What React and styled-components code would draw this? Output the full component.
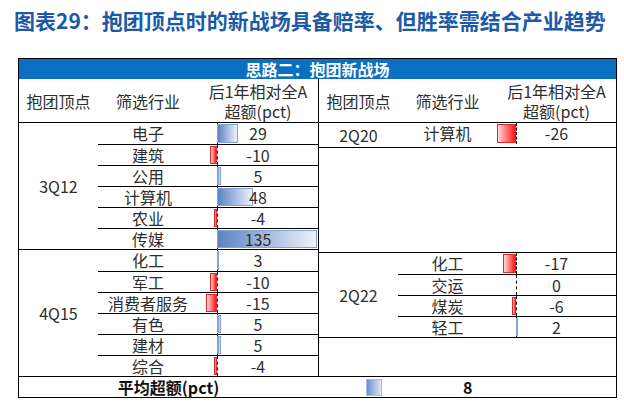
import styled, { createGlobalStyle, css } from "styled-components";

const GlobalStyle = createGlobalStyle`
  html, body {
    margin: 0;
    padding: 0;
    background: #fff;
  }
  body {
    font-family: "Noto Sans CJK SC", "Liberation Sans", sans-serif;
    color: #2e2e2e;
  }
`;

const AXIS = 19;
const SCALE = 0.74;

const Page = styled.main`
  width: 624px;
  height: 410px;
  box-sizing: border-box;
  padding: 6px 0 0 14px;
`;

const Title = styled.h1`
  margin: 0;
  font-size: 21px;
  line-height: 28px;
  font-weight: 700;
  color: #1c5aa6;
  white-space: nowrap;
`;

const Table = styled.section`
  margin: 24px 0 0 4px;
  width: 599px;
  box-sizing: border-box;
  border: 1px solid #000;
  display: grid;
  grid-template-columns: 299px 1fr;
  font-size: 16px;
`;

const Banner = styled.div`
  grid-column: 1 / -1;
  height: 20px;
  background: #0b6fc2;
  color: #fff;
  font-weight: 700;
  font-size: 16px;
  line-height: 20px;
  text-align: center;
`;

const Half = styled.div`
  display: flex;
  flex-direction: column;
  ${(p) => p.$right && css`border-left: 1px solid #000;`}
`;

const HeadRow = styled.div`
  display: grid;
  grid-template-columns: ${(p) => p.$cols};
  height: 44px;
  box-sizing: border-box;
  border-bottom: 1px solid #000;
  align-items: center;
  text-align: center;
  line-height: 20px;
`;

const Group = styled.div`
  display: grid;
  grid-template-columns: 79px 1fr;
  ${(p) => p.$top && css`border-top: 1px solid #000;`}
  ${(p) => p.$bottom && css`border-bottom: 1px solid #000;`}
`;

const GroupLabel = styled.div`
  display: flex;
  align-items: center;
  justify-content: center;
`;

const Rows = styled.div`
  display: flex;
  flex-direction: column;
`;

const Row = styled.div`
  display: grid;
  grid-template-columns: ${(p) => p.$nameW}px 1fr;
  height: 21px;
  box-sizing: border-box;
  line-height: 20px;
  &:not(:first-child) {
    border-top: 1px solid #000;
  }
`;

const Name = styled.div`
  text-align: center;
`;

const ValueCell = styled.div`
  position: relative;
  text-align: center;
  &::before {
    content: "";
    position: absolute;
    left: ${AXIS}px;
    top: 0;
    bottom: 0;
    border-left: 1px dashed #000;
  }
`;

const Bar = styled.span`
  position: absolute;
  top: 1px;
  bottom: 1px;
  box-sizing: border-box;
  ${(p) =>
    p.$neg
      ? css`
          right: calc(100% - ${AXIS}px);
          background: linear-gradient(to right, #ffd9d9, #ff1414);
          border: 1px solid #d92b2b;
        `
      : css`
          left: ${AXIS}px;
          background: linear-gradient(to right, #5a84c5, #eef2fa);
          border: 1px solid #86a3d8;
        `}
`;

const Num = styled.span`
  position: relative;
`;

const Blank = styled.div`
  ${(p) => (p.$h ? css`height: ${p.$h}px;` : css`flex: 1;`)}
`;

const AvgRow = styled.div`
  grid-column: 1 / -1;
  display: grid;
  grid-template-columns: 299px 1fr;
  height: 20px;
  border-top: 1px solid #000;
  font-weight: 700;
  line-height: 20px;
  color: #111;
`;

const AvgLabel = styled.div`
  text-align: center;
`;

const AvgValue = styled.div`
  display: flex;
  align-items: center;
`;

const AvgBar = styled.span`
  margin-left: 48px;
  width: 16px;
  height: 17px;
  box-sizing: border-box;
  background: linear-gradient(to right, #6a8fcd, #dfe7f5);
  border: 1px solid #a9bde2;
`;

const AvgNum = styled.span`
  margin-left: 81px;
`;

function Value({ v }) {
  const w = Math.max(2, Math.abs(v) * SCALE);
  return (
    <ValueCell>
      {v !== 0 && <Bar $neg={v < 0} style={{ width: w }} />}
      <Num>{v}</Num>
    </ValueCell>
  );
}

function Block({ label, rows, nameW, top, bottom }) {
  return (
    <Group $top={top} $bottom={bottom}>
      <GroupLabel>{label}</GroupLabel>
      <Rows>
        {rows.map(([n, v]) => (
          <Row key={n} $nameW={nameW}>
            <Name>{n}</Name>
            <Value v={v} />
          </Row>
        ))}
      </Rows>
    </Group>
  );
}

function Head({ cols }) {
  return (
    <HeadRow $cols={cols}>
      <div>抱团顶点</div>
      <div>筛选行业</div>
      <div>
        后1年相对全A
        <br />
        超额(pct)
      </div>
    </HeadRow>
  );
}

const g3Q12 = [
  ["电子", 29],
  ["建筑", -10],
  ["公用", 5],
  ["计算机", 48],
  ["农业", -4],
  ["传媒", 135],
];

const g4Q15 = [
  ["化工", 3],
  ["军工", -10],
  ["消费者服务", -15],
  ["有色", 5],
  ["建材", 5],
  ["综合", -4],
];

const g2Q22 = [
  ["化工", -17],
  ["交运", 0],
  ["煤炭", -6],
  ["轻工", 2],
];

export default function App() {
  return (
    <Page>
      <GlobalStyle />
      <Title>图表29：抱团顶点时的新战场具备赔率、但胜率需结合产业趋势</Title>
      <Table>
        <Banner>思路二：抱团新战场</Banner>
        <Half>
          <Head cols="79px 100px 120px" />
          <Block label="3Q12" rows={g3Q12} nameW={100} />
          <Block label="4Q15" rows={g4Q15} nameW={100} top />
        </Half>
        <Half $right>
          <Head cols="79px 99px 1fr" />
          <Block label="2Q20" rows={[["计算机", -26]]} nameW={99} bottom />
          <Blank $h={104} />
          <Block label="2Q22" rows={g2Q22} nameW={99} top bottom />
          <Blank />
        </Half>
        <AvgRow>
          <AvgLabel>平均超额(pct)</AvgLabel>
          <AvgValue>
            <AvgBar />
            <AvgNum>8</AvgNum>
          </AvgValue>
        </AvgRow>
      </Table>
    </Page>
  );
}
